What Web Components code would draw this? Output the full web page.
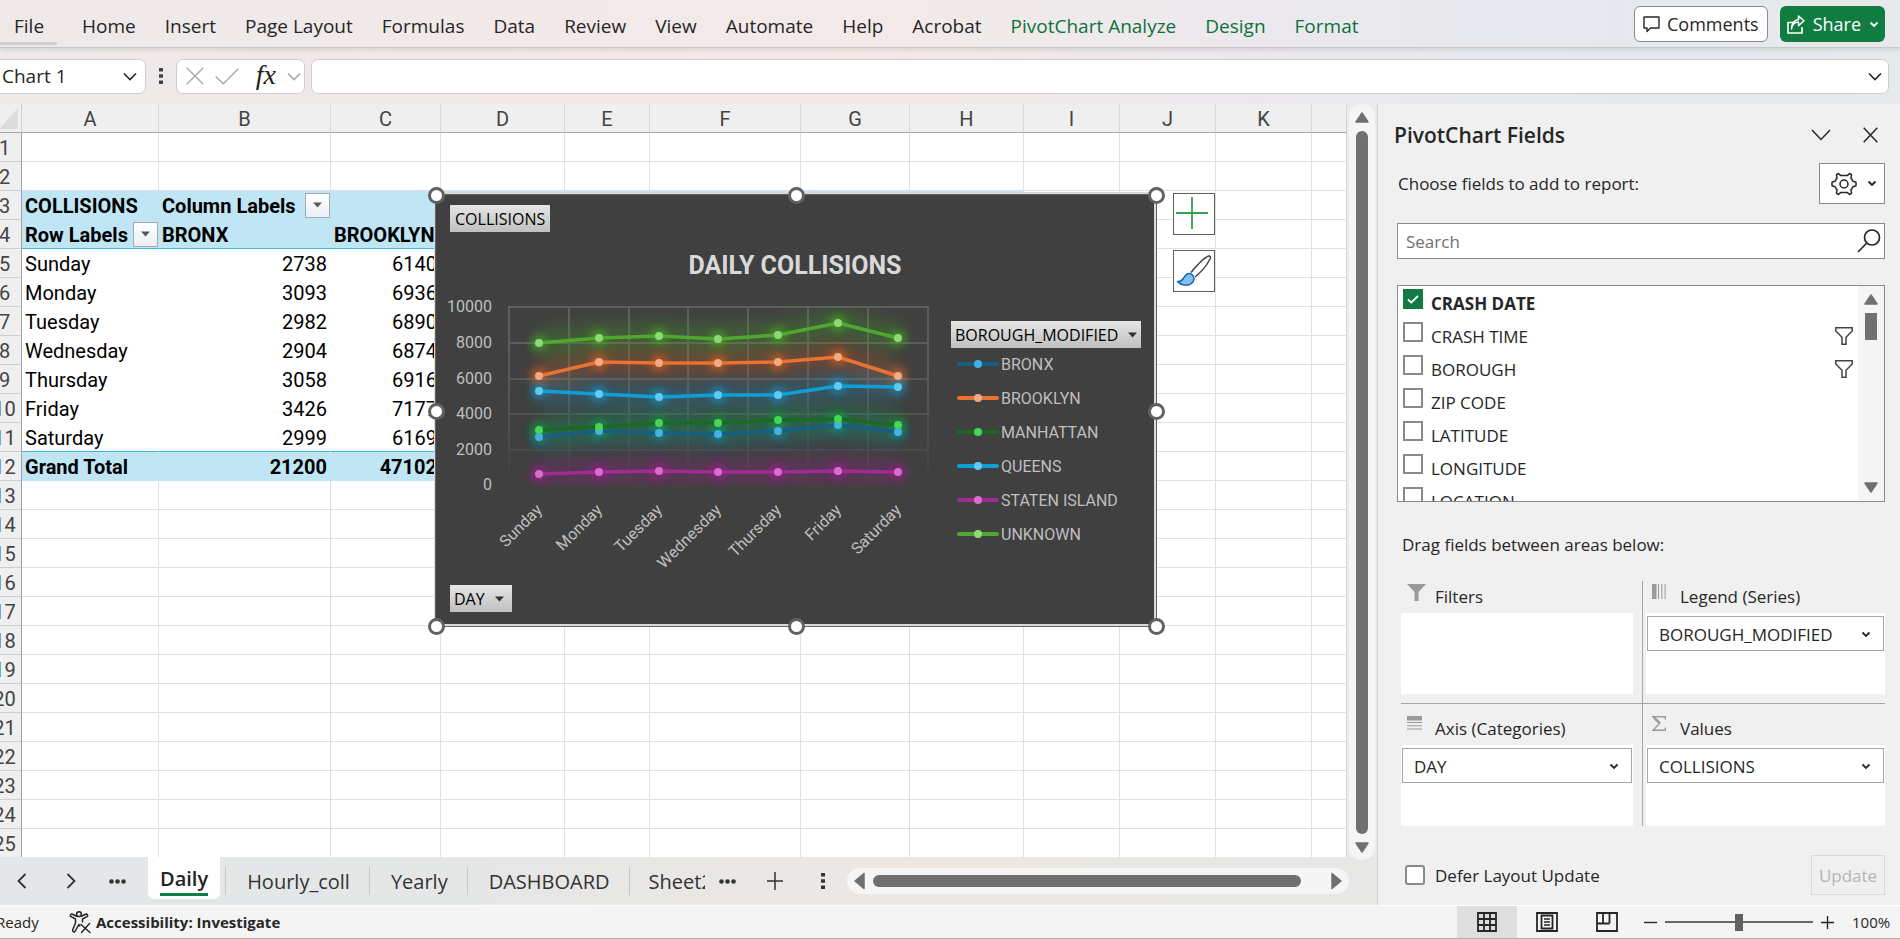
<!DOCTYPE html>
<html lang="en">
<head>
<meta charset="utf-8">
<title>Daily collisions workbook</title>
<style>
  html, body { margin: 0; height: 100%; }
  body {
    --ui: "Open Sans", "Noto Sans", sans-serif;
    --cell: Roboto, "Liberation Sans", sans-serif;
    --green: #107c41;
    --ink: #262626;
    font-family: var(--ui);
    font-size: 17px;
    color: var(--ink);
    overflow: hidden;
  }
</style>
</head>
<body>
<workbook-app></workbook-app>

<script>
const BASE = `<style>
  *, *::before, *::after { box-sizing: border-box; }
  button, input { font: inherit; color: inherit; margin: 0; padding: 0; }
  button { background: none; border: 0; white-space: nowrap; }
</style>`;

function define(name, html, setup) {
  customElements.define(name, class extends HTMLElement {
    constructor() {
      super();
      this.attachShadow({ mode: 'open' }).innerHTML = BASE + html;
    }
    connectedCallback() {
      if (setup && !this.ready) { this.ready = true; setup(this, this.shadowRoot); }
    }
  });
}

/* ---------- icons: [width, height, markup] ---------- */
const line = (w, c = 'currentColor') => `fill="none" stroke="${c}" stroke-width="${w}"`;
const ICONS = {
  chevron: [14, 9, `<path d="M1 1.5 7 7.5 13 1.5" ${line(1.6)}/>`],
  chevronWide: [20, 12, `<path d="M1 1 10 10.5 19 1" ${line(1.5)}/>`],
  chevronSmall: [10, 7, `<path d="M1.5 1.5 5 5 8.5 1.5" ${line(1.8)}/>`],
  left: [10, 16, `<path d="M8.500 1 1.500 8 8.500 15" ${line(1.8)}/>`],
  right: [10, 16, `<path d="M1.500 1 8.500 8 1.500 15" ${line(1.8)}/>`],
  dots: [17, 5, `<g fill="currentColor"><circle cx="2.500" cy="2.500" r="2.300"/><circle cx="8.500" cy="2.500" r="2.300"/><circle cx="14.500" cy="2.500" r="2.300"/></g>`],
  vdots: [4, 16, `<path d="M0 0h4v3.500H0zM0 6.200h4v3.500H0zM0 12.400h4v3.500H0z" fill="currentColor"/>`],
  close: [15, 16, `<path d="M.7.7 14.300 15.300M14.300.7.7 15.300" ${line(1.5)}/>`],
  cancel: [18, 18, `<path d="M.7.7 17.300 17.300M17.300.7.7 17.300" ${line(1.4)}/>`],
  check: [24, 17, `<path d="M.7 8.500 8.300 15.800 23.300.7" ${line(1.4)}/>`],
  plus: [16, 18, `<path d="M8 0v18M0 9h16" ${line(1.5)}/>`],
  plusSmall: [13, 13, `<path d="M6.500 0v13M0 6.500h13" ${line(1.4)}/>`],
  minus: [13, 3, `<path d="M0 1.500h13" ${line(1.4)}/>`],
  comment: [17, 17, `<path d="M1 1h15v11H7.500L4 15.500V12H1z" ${line(1.4)} stroke-linejoin="round"/>`],
  share: [18, 19, `<path d="M6 7.500H1V18h14v-6" ${line(1.6)}/><path d="M4.500 14C5 9.500 7.500 7.200 11.500 7V10.800L17 5.700 11.500 1V4.400C7 5 4.700 8.500 4.500 14z" ${line(1.5)} stroke-linejoin="round"/>`],
  caret: [9, 6, `<path d="M0 .5h9L4.500 5.500z" fill="currentColor"/>`],
  triUp: [14, 11, `<path d="M7 1 13 10H1z" fill="currentColor" stroke="currentColor" stroke-width="1.500" stroke-linejoin="round"/>`],
  triDown: [14, 11, `<path d="M7 10 1 1H13z" fill="currentColor" stroke="currentColor" stroke-width="1.500" stroke-linejoin="round"/>`],
  triLeft: [11, 16, `<path d="M1 8 10 .5V15.500z" fill="currentColor" stroke="currentColor" stroke-width="1.500" stroke-linejoin="round"/>`],
  triRight: [11, 16, `<path d="M10 8 1 .5V15.500z" fill="currentColor" stroke="currentColor" stroke-width="1.500" stroke-linejoin="round"/>`],
  gear: [26, 24, `<g ${line(1.5)} stroke-linejoin="round"><path d="M7.500 1.500 9.500 3.400H16.500L18.500 1.500 20.500 2.700 20 6 22 9.300 25 10.200V13.800L22 14.700 20 18 20.500 21.300 18.500 22.500 16.500 20.600H9.500L7.500 22.500 5.500 21.300 6 18 4 14.700 1 13.800V10.200L4 9.300 6 6 5.500 2.700z"/><circle cx="13" cy="12" r="4"/></g>`],
  search: [24, 24, `<g ${line(1.7)}><circle cx="15" cy="8.500" r="7.500"/><path d="M9.800 14 1 23"/></g>`],
  funnel: [18, 18, `<path d="M.8.8H17.200V4L11 10.300V17.200H7V10.300L.8 4z" ${line(1.5)}/>`],
  funnelSolid: [19, 17, `<path d="M0 0H19L11.500 8V17H7.500V8z" fill="#9a9a9a"/>`],
  columns: [14, 15, `<path d="M0 0h4.500v15H0zM6 0h1v15H6zM9.300 0h1v15h-1zM12.600 0h1v15h-1z" fill="#9a9a9a"/>`],
  rows: [15, 14, `<path d="M0 0h15v4.500H0zM0 6h15v1H0zM0 9.200h15v1H0zM0 12.400h15v1H0z" fill="#9a9a9a"/>`],
  sigma: [14, 15, `<path d="M13.300 3.500V.7H1L7.500 7.500 1 14.300H13.300V11.500" ${line(1.4, '#9a9a9a')}/><path d="M1.500 1 8 7.500" ${line(2.4, '#9a9a9a')}/>`],
  grid: [20, 20, `<path d="M1 1H19V19H1zM1 7H19M1 13H19M7 1V19M13 1V19" ${line(1.8)}/>`],
  layout: [22, 20, `<g ${line(1.8)}><path d="M1 1H21V19H1z"/><path d="M5.500 3.500H16.500V16.500H5.500z" /><path d="M8 7H14M8 10H14M8 13H14" stroke-width="1.400"/></g>`],
  breaks: [22, 20, `<path d="M1 1H21V19H1zM7 1V11.500M13.500 1V11.500M1 11.500H13.500" ${line(1.8)}/>`],
  person: [22, 22, `<g ${line(1.5)} stroke-linejoin="round" stroke-linecap="round"><circle cx="10" cy="3.200" r="2.400"/><path d="M7.800 5.200 2.800 3C1.200 3 .8 5 2 5.600L6.500 8V12L3.600 19C3.400 21 5.600 21.500 6.300 20L9.800 13.500 10.800 15"/><path d="M12.200 5.200 17.200 3C18.800 3 19.200 5 18 5.600L13.500 8V11"/><path d="M12 13.500 21 21.500M20.500 12.500 12.500 21.500"/></g>`],
  corner: [19, 21, `<path d="M19 0V21H0z" fill="#dcdcdc"/>`],
  cross: [26, 32, `<path d="M13 0V32M-3 16H29" ${line(1.8, '#38a14c')}/>`],
  brush: [36, 32, `<path d="M15 17.500C19 12 28 3 32 1.300 34.500.5 35 1.800 34 4 31 10 24 18 19 22" fill="#fff" stroke="#444" stroke-width="1.500"/><path d="M1.500 26.500C5 27 6.500 25 8 22.500 10 18.500 13 17.500 16 19.500 19 22 18.500 26 15.500 28.500 11.500 31.500 5 30.500 1.500 26.500z" fill="#83beec" stroke="#1266b4" stroke-width="1.500" stroke-linejoin="round"/>`]
};
define('ui-icon', `<style>:host{display:inline-flex;flex:none} svg{display:block;overflow:visible}</style><span></span>`, (el, root) => {
  const [w, h, body] = ICONS[el.getAttribute('name')];
  root.querySelector('span').innerHTML = `<svg width="${w}" height="${h}" viewBox="0 0 ${w} ${h}" aria-hidden="true">${body}</svg>`;
});

/* ---------- ribbon ---------- */
define('ribbon-tab', `<style>
  :host { display: block; }
  button { font-size: 19px; line-height: 26px; padding: 8px 15px 0 14px; height: 42px; border-bottom: 3px solid transparent; }
  :host([contextual]) button { color: #0f703b; }
  :host([first]) button { padding: 8px 13px 0 14px; border-bottom-color: #d0d0d0; border-radius: 2px; }
</style><button type="button" role="tab"><slot></slot></button>`);

define('ribbon-bar', `<style>
  :host { display: flex; align-items: center; height: 48px; padding-right: 15px;
    background: linear-gradient(90deg, #efe9ea, #f3eae8 45%, #ebe9ee 68%, #e5e9ee 85%, #e8e9ec);
    border-bottom: 1px solid #c9c6c7; box-shadow: 0 2px 4px #0000001a; position: relative; }
  nav { display: flex; flex: 1; }
  ribbon-tab[first] { margin-right: 11px; }
  .action { display: flex; align-items: center; height: 36px; border-radius: 6px; font-size: 18px; line-height: 26px; }
  .comments { gap: 7px; padding: 1px 8px 0; background: #fff; border: 1px solid #8a8a8a; margin-right: 12px; }
  .share { gap: 8px; padding: 1px 6px 0 7px; background: var(--green); color: #fff; }
</style>
<nav role="tablist" aria-label="Ribbon">
  <ribbon-tab first>File</ribbon-tab><ribbon-tab>Home</ribbon-tab><ribbon-tab>Insert</ribbon-tab>
  <ribbon-tab>Page Layout</ribbon-tab><ribbon-tab>Formulas</ribbon-tab><ribbon-tab>Data</ribbon-tab>
  <ribbon-tab>Review</ribbon-tab><ribbon-tab>View</ribbon-tab><ribbon-tab>Automate</ribbon-tab>
  <ribbon-tab>Help</ribbon-tab><ribbon-tab>Acrobat</ribbon-tab>
  <ribbon-tab contextual>PivotChart Analyze</ribbon-tab><ribbon-tab contextual>Design</ribbon-tab><ribbon-tab contextual>Format</ribbon-tab>
</nav>
<button class="action comments" type="button"><ui-icon name="comment"></ui-icon>Comments</button>
<button class="action share" type="button"><ui-icon name="share"></ui-icon>Share<ui-icon name="chevronSmall"></ui-icon></button>`);

/* ---------- formula bar ---------- */
define('formula-bar', `<style>
  :host { display: flex; align-items: center; height: 56px; padding: 0 11px 0 0;
    background: linear-gradient(90deg, #efe9ea, #f4e8e6 45%, #ebe9ee 68%, #e5e9ee 85%, #e6eaed); }
  .box { display: flex; align-items: center; height: 35px; background: #fff; border: 1px solid #cfcdcd; border-radius: 7px; }
  .name { width: 154px; margin-left: -8px; padding: 0 8px 0 9px; }
  input { border: 0; outline: 0; background: none; min-width: 0; flex: 1; font-size: 19px; }
  .grip { margin: 0 13px; color: #444; }
  .fx { width: 129px; justify-content: space-between; padding: 0 3px 0 9px; color: #a8a8a8; }
  .fx button { display: flex; }
  .fn { font: italic 400 28px/28px "Liberation Serif", serif; color: #222; padding: 0 0 2px 6px; }
  .formula { flex: 1; margin-left: 6px; padding: 0 6px 0 8px; }
</style>
<div class="box name"><input aria-label="Name box" value="Chart 1"><ui-icon name="chevron"></ui-icon></div>
<ui-icon class="grip" name="vdots"></ui-icon>
<div class="box fx">
  <button type="button" aria-label="Cancel"><ui-icon name="cancel"></ui-icon></button>
  <button type="button" aria-label="Enter"><ui-icon name="check"></ui-icon></button>
  <button type="button" class="fn">fx</button>
  <button type="button" aria-label="Functions"><ui-icon name="chevron"></ui-icon></button>
</div>
<div class="box formula"><input aria-label="Formula"><ui-icon name="chevron"></ui-icon></div>`);

/* ---------- worksheet grid ---------- */
const COLS = { A: 137, B: 172, C: 110, D: 124, E: 85, F: 151, G: 109, H: 114, I: 96, J: 96, K: 96 };
const DATA = {
  3: ['COLLISIONS', 'Column Labels', ''],
  4: ['Row Labels', 'BRONX', 'BROOKLYN'],
  5: ['Sunday', 2738, 6140], 6: ['Monday', 3093, 6936], 7: ['Tuesday', 2982, 6890],
  8: ['Wednesday', 2904, 6874], 9: ['Thursday', 3058, 6916], 10: ['Friday', 3426, 7177],
  11: ['Saturday', 2999, 6169], 12: ['Grand Total', 21200, 47102]
};
define('sheet-grid', `<style>
  :host { display: block; overflow: hidden; position: relative; background: #fff; font-family: var(--cell); font-size: 20px; }
  table { width: calc(100% + 17px); margin-left: -17px; border-collapse: separate; border-spacing: 0; table-layout: fixed; }
  th, td { height: 29px; padding: 2px 3px 0; line-height: 26px; white-space: nowrap; overflow: hidden;
    border-right: 1px solid #e0e0e0; border-bottom: 1px solid #e0e0e0; text-align: left; font-weight: 400; }
  thead th { background: #efefef; text-align: center; color: #444; border-right-color: #d9d9d9; border-bottom-color: #a6a6a6; }
  tbody th { background: #efefef; color: #444; text-align: center; padding-left: 5px; padding-right: 0; border-right-color: #a0a0a0; border-bottom-color: #cfcfcf; }
  thead th:first-child { padding: 0 3px 3px 0; vertical-align: bottom; line-height: 0; text-align: right; border-right-color: #cfcfcf; }
  td:last-child, th:last-child { border-right-color: #d6d6d6; }
  tr.plain td.pv { border-color: transparent; color: #000; }
  tr.head td.pv { background: #c0e6f5; border-color: #c0e6f5; font-weight: 700; color: #000; }
  tr.rule td.pv { border-bottom-color: #44b3e1; }
  td.num { text-align: right; }
  td.drop { padding: 0 0 0 3px; }
  .lab { display: flex; justify-content: space-between; align-items: center; height: 28px; }
  .lab span { padding-top: 2px; }
  .lab button { width: 25px; height: 25px; display: flex; align-items: center; justify-content: center;
    border: 1px solid #a3a9b3; background: linear-gradient(#fff, #eaeef5); color: #5a5a5a; }
  ::slotted(*) { position: absolute; }
</style><table aria-label="Worksheet Daily"></table><slot></slot>`, (el, root) => {
  const names = Object.keys(COLS);
  let html = '<colgroup><col style="width:39px">' + names.map(n => `<col style="width:${COLS[n]}px">`).join('') + '<col></colgroup>';
  html += '<thead><tr><th><ui-icon name="corner"></ui-icon></th>' + names.map(n => `<th scope="col">${n}</th>`).join('') + '<th></th></tr></thead><tbody>';
  for (let r = 1; r <= 25; r++) {
    const row = DATA[r];
    const cls = !row ? '' : [3, 4, 12].includes(r) ? 'head' : 'plain';
    const rule = r === 4 || r === 11 ? ' rule' : '';
    html += `<tr class="${cls}${rule}"><th scope="row">${r}</th>`;
    for (let c = 0; c < 12; c++) {
      const v = row && c < 3 ? row[c] : '';
      const drop = (r === 3 && c === 1) || (r === 4 && c === 0);
      const k = (row && c < 8 ? 'pv' : '') + (typeof v === 'number' ? ' num' : '') + (drop ? ' drop' : '');
      html += `<td class="${k}">` + (drop
        ? `<div class="lab"><span>${v}</span><button type="button" aria-label="Filter ${v}"><ui-icon name="caret"></ui-icon></button></div>` : v) + '</td>';
    }
    html += '</tr>';
  }
  root.querySelector('table').innerHTML = html + '</tbody>';
});

/* ---------- pivot chart ---------- */
const SERIES = [
  { name: 'BRONX', line: '#156082', dot: '#45b0e1', y: [437, 431, 433, 434, 431, 425, 432], glow: '#0f8ea8' },
  { name: 'BROOKLYN', line: '#e97132', dot: '#f2aa84', y: [376, 362, 363, 363, 362, 357, 376], glow: '#e9601c' },
  { name: 'MANHATTAN', line: '#196b24', dot: '#47d459', y: [430, 427, 423, 423, 420, 419, 425], glow: '#12962a' },
  { name: 'QUEENS', line: '#0f9ed5', dot: '#60caf3', y: [391, 394, 397, 395, 395, 386, 387], glow: '#1597d0' },
  { name: 'STATEN ISLAND', line: '#a02b93', dot: '#d86dcd', y: [474, 472, 471, 472, 472, 471, 472], glow: '#a8189a' },
  { name: 'UNKNOWN', line: '#4ea72e', dot: '#8ed973', y: [343, 338, 336, 339, 335, 323, 338], glow: '#45b51c' }
];
const PX = [539, 599, 659, 718, 778, 838, 898];
const DAYS = ['Sunday', 'Monday', 'Tuesday', 'Wednesday', 'Thursday', 'Friday', 'Saturday'];

define('field-button', `<style>
  :host { display: block; }
  button { display: flex; width: 100%; align-items: center; justify-content: space-between; height: 27px; padding: 0 5px 0 4px; font: 16px/26px var(--ui); color: #000;
    background: linear-gradient(#e6e6e6, #bfbfbf); }
  ui-icon { margin: 0 3px 0 10px; color: #333; }
  :host([plain]) ui-icon { display: none; }
  :host([plain]) button { padding: 0 5px; }
</style><button type="button"><slot></slot><ui-icon name="caret"></ui-icon></button>`);

define('pivot-chart', `<style>
  :host { display: flex; flex-direction: column; width: 722px; height: 434px; background: #404040; border: 2px solid #d9d9d9;
    padding: 11px 13px 12px 4px; color: #d9d9d9; }
  .frame { position: absolute; inset: 0 -3px -3px -1px; border: 1px solid #636363; }
  i { position: absolute; width: 17px; height: 17px; margin: -8px; border: 3px solid #616161; border-radius: 50%; background: #fff; }
  field-button { align-self: flex-start; margin-left: 10px; }
  h2 { margin: 19px 0 -1px 9px; text-align: center; font-size: 25px; line-height: 30px; font-weight: 700; }
  .body { display: grid; grid-template-columns: 1fr 190px; flex: 1; }
  svg { display: block; overflow: visible; }
  .axis { fill: #bfbfbf; font-size: 16px; }
  aside { padding-top: 41px; }
  aside field-button { margin: 0; }
  ul { list-style: none; margin: -1px 0 0; padding: 0 0 0 6px; font-size: 16px; color: #bfbfbf; }
  li { display: flex; align-items: center; gap: 2px; height: 34px; }
  .tools { position: absolute; left: 737px; top: -1px; display: flex; flex-direction: column; gap: 15px; }
  .tools button { width: 42px; height: 42px; display: flex; align-items: center; justify-content: center; background: #fff; border: 1px solid #5e5e5e; }
  .tools button:first-child { padding: 0 4px 3px 0; }
</style>
<field-button plain>COLLISIONS</field-button>
<h2>DAILY COLLISIONS</h2>
<div class="body"><svg width="511" height="305" viewBox="440 280 511 305" role="img" aria-label="Daily collisions by borough"></svg>
  <aside><field-button>BOROUGH_MODIFIED</field-button><ul></ul></aside></div>
<field-button>DAY</field-button>
<div class="frame"></div>
<div class="tools"><button type="button" aria-label="Chart elements"><ui-icon name="cross"></ui-icon></button>
<button type="button" aria-label="Chart styles"><ui-icon name="brush"></ui-icon></button></div>`, (el, root) => {
  const xs = [509, 569, 629, 688, 748, 808, 868, 928];
  const ys = [307, 343, 379, 414, 450, 485];
  let s = `<defs><linearGradient id="fade" gradientUnits="userSpaceOnUse" x1="0" y1="307" x2="0" y2="485"><stop offset="0" stop-color="#5f5f5f"/><stop offset=".5" stop-color="#575757"/><stop offset="1" stop-color="#404040"/></linearGradient>
    <filter id="soft" filterUnits="userSpaceOnUse" x="440" y="280" width="511" height="240"><feGaussianBlur stdDeviation="8"/></filter>
    <filter id="spot" filterUnits="userSpaceOnUse" x="440" y="280" width="511" height="240"><feGaussianBlur stdDeviation="4"/></filter>
    <clipPath id="plot"><path d="M508 306H929V486H508z"/></clipPath></defs>`;
  s += '<g fill="url(#fade)">' + xs.map(x => `<rect x="${x - 1}" y="306" width="2" height="180"/>`).join('') + '</g>';
  const tone = ['#5f5f5f', '#5c5c5c', '#585858', '#535353', '#4a4a4a', '#404040'];
  s += ys.map((y, i) => `<path d="M508 ${y}H929" stroke="${tone[i]}" stroke-width="2"/>`).join('');
  const pts = q => q.y.map((y, i) => PX[i] + ',' + y).join(' ');
  s += '<g clip-path="url(#plot)">' + SERIES.map(q => `<polyline points="${pts(q)}" fill="none" stroke="${q.glow}" stroke-width="28" opacity=".24" filter="url(#soft)"/>`).join('') + '</g>';
  s += SERIES.map(q => `<g filter="url(#spot)" opacity=".65" fill="${q.glow}">` + q.y.map((y, i) => `<circle cx="${PX[i]}" cy="${y}" r="8"/>`).join('') + '</g>').join('');
  s += SERIES.map(q => `<polyline points="${pts(q)}" fill="none" stroke="${q.line}" stroke-width="3.5" stroke-linejoin="round"/>` +
    q.y.map((y, i) => `<circle cx="${PX[i]}" cy="${y}" r="4" fill="${q.dot}"/>`).join('')).join('');
  s += ys.map((y, i) => `<text class="axis" x="492" y="${y + 5}" text-anchor="end">${10000 - 2000 * i}</text>`).join('');
  s += DAYS.map((d, i) => `<text class="axis" text-anchor="end" transform="translate(${PX[i] + 4} 511) rotate(-45)">${d}</text>`).join('');
  root.querySelector('svg').innerHTML = s;
  root.querySelector('ul').innerHTML = SERIES.map(q => `<li><svg width="42" height="10" aria-hidden="true"><path d="M2 5H40" stroke="${q.line}" stroke-width="4" stroke-linecap="round"/><circle cx="21" cy="5" r="4" fill="${q.dot}"/></svg>${q.name}</li>`).join('');
  for (const y of [0, 50, 100]) for (const x of [0, 50, 100]) {
    if (x === 50 && y === 50) continue;
    const h = document.createElement('i');
    h.style.left = x + '%'; h.style.top = y + '%';
    root.querySelector('.frame').append(h);
  }
});

/* ---------- scroll bars ---------- */
define('scroll-track', `<style>
  :host { display: flex; flex-direction: column; align-items: center; width: 26px; padding: 8px 0 7px; gap: 8px; border-radius: 13px; background: #f5f5f5; color: #707070; }
  .end { display: flex; }
  .rail { flex: 1; width: 12px; display: flex; flex-direction: column; }
  .rail::before { content: ""; width: 12px; border-radius: 6px; background: #707070; flex: 1; }
  :host([horizontal]) { flex-direction: row; width: auto; height: 26px; padding: 0 7px; }
  :host([horizontal]) .rail { width: auto; height: 12px; padding-right: 22px; }
  :host([horizontal]) .rail::before { width: auto; }
  :host([square]) { border-radius: 0; padding: 8px 0; }
  :host([square]) .rail::before { flex: none; height: 27px; border-radius: 0; }
</style><span class="end"></span><div class="rail"></div><span class="end"></span>`, (el, root) => {
  const names = el.hasAttribute('horizontal') ? ['triLeft', 'triRight'] : ['triUp', 'triDown'];
  root.querySelectorAll('.end').forEach((e, i) => { e.innerHTML = `<ui-icon name="${names[i]}"></ui-icon>`; });
});

/* ---------- sheet tabs ---------- */
define('sheet-tabs', `<style>
  :host { display: flex; align-items: center; height: 48px; font-size: 20px; color: #333; }
  button { display: flex; align-items: center; }
  .nav { gap: 39px; padding: 0 22px 0 17px; display: flex; }
  .nav button:last-child { margin-left: -6px; }
  [role=tablist] { display: flex; height: 100%; align-items: center; }
  .active { align-self: flex-start; height: 42px; background: #fff; border-radius: 0 0 6px 6px; padding: 0 12px; font-weight: 600; color: #222; margin-right: 5px; }
  .active span { border-bottom: 3px solid var(--green); line-height: 28px; padding-top: 4px; }
  .tab { height: 28px; border-left: 1px solid #c6c8c8; padding: 2px 19px 0 21px; line-height: 28px; }
  .cut { width: 76px; padding-left: 19px; padding-right: 0; overflow: hidden; }
  .more { margin: 0 31px 0 14px; }
  .grip { margin: 0 22px 0 38px; }
  scroll-track { flex: 1; }
</style>
<div class="nav"><button type="button" aria-label="Previous sheet"><ui-icon name="left"></ui-icon></button><button type="button" aria-label="Next sheet"><ui-icon name="right"></ui-icon></button><button type="button" aria-label="All sheets"><ui-icon name="dots"></ui-icon></button></div>
<div role="tablist" aria-label="Sheets">
  <button type="button" class="active" role="tab" aria-selected="true"><span>Daily</span></button>
  <button type="button" class="tab" role="tab">Hourly_coll</button><button type="button" class="tab" role="tab">Yearly</button>
  <button type="button" class="tab" role="tab">DASHBOARD</button><button type="button" class="tab cut" role="tab">Sheet2</button>
</div>
<button class="more" type="button" aria-label="More sheets"><ui-icon name="dots"></ui-icon></button>
<button type="button" aria-label="New sheet"><ui-icon name="plus"></ui-icon></button>
<ui-icon class="grip" name="vdots"></ui-icon>
<scroll-track horizontal></scroll-track>`);

/* ---------- fields pane ---------- */
define('field-check', `<style>
  :host { display: block; height: 33px; }
  label { display: flex; align-items: flex-start; gap: 8px; padding: 3px 5px 0 5px; height: 33px; }
  span { flex: 1; line-height: 30px; }
  input { appearance: none; width: 20px; height: 20px; border: 2px solid #8a8a8a; background: #fff; flex: none; }
  input:checked { border-color: var(--green); background: var(--green) url("data:image/svg+xml,%3Csvg xmlns='http://www.w3.org/2000/svg' width='16' height='16'%3E%3Cpath d='M3 8.500 6.300 11.500 13 5' fill='none' stroke='white' stroke-width='1.800'/%3E%3C/svg%3E") center; }
  ui-icon { margin: 5px 0 0; display: none; color: #444; }
  :host([filtered]) ui-icon { display: inline-flex; }
  :host([checked]) span { font-weight: 700; }
</style><label><input type="checkbox"><span><slot></slot></span><ui-icon name="funnel"></ui-icon></label>`, (el, root) => {
  root.querySelector('input').checked = el.hasAttribute('checked');
});

define('field-area', `<style>
  :host { display: flex; flex-direction: column; }
  h3 { display: flex; align-items: flex-start; margin: 0; height: 32px; padding-top: 3px; font-size: 17px; font-weight: 400; line-height: 26px; }
  .ic { display: flex; width: 34px; padding-left: 6px; }
  b { font-weight: 400; }
  .drop { background: #fff; height: 81px; padding: 3px 1px; }
</style><h3><span class="ic"></span><b></b></h3><div class="drop"><slot></slot></div>`, (el, root) => {
  root.querySelector('.ic').innerHTML = `<ui-icon name="${el.getAttribute('icon')}"></ui-icon>`;
  root.querySelector('b').textContent = el.getAttribute('label');
});

define('area-field', `<style>
  :host { display: block; }
  button { width: 100%; height: 35px; display: flex; align-items: center; justify-content: space-between; padding: 1px 12px 0 11px; border: 1px solid #a6a6a6; background: #fff; }
</style><button type="button" aria-haspopup="menu"><slot></slot><ui-icon name="chevronSmall"></ui-icon></button>`);

define('fields-pane', `<style>
  :host { display: flex; flex-direction: column; background: #f0f0f0; border-left: 1px solid #d0d0d0; padding: 0 15px 10px 19px; }
  header { display: flex; align-items: center; height: 60px; padding: 2px 7px 0 0; margin-left: -3px; }
  h2 { flex: 1; margin: 0; font-size: 21px; line-height: 28px; font-weight: 600; }
  header button { display: flex; margin-left: 32px; }
  .choose { display: flex; align-items: center; height: 39px; }
  p { margin: 0; flex: 1; padding-left: 1px; }
  .gear { display: flex; align-items: center; justify-content: flex-end; gap: 10px; width: 66px; height: 41px; padding: 0 7px 0 0; border: 1px solid #8a8a8a; background: #fff; }
  .search { display: flex; align-items: center; margin-top: 20px; height: 36px; padding: 0 3px 0 8px; border: 1px solid #8a8a8a; background: #fff; }
  .search input { flex: 1; border: 0; outline: 0; background: none; min-width: 0; }
  .search input::placeholder { color: #707070; opacity: 1; }
  .list { display: flex; height: 217px; margin-top: 26px; border: 1px solid #8a8a8a; background: #fff; overflow: hidden; flex: none; }
  .list > div { flex: 1; overflow: hidden; }
  .drag { margin: 30px 0 23px 4px; line-height: 26px; flex: none; }
  .areas { display: grid; grid-template-columns: 242px 1fr; margin-left: 4px; }
  field-area { padding: 0 9px 9px 0; border-right: 1px solid #a6a6a6; border-bottom: 1px solid #a6a6a6; }
  field-area:nth-child(even) { padding-left: 3px; padding-right: 0; border-right: 0; }
  field-area:nth-child(n+3) { border-bottom: 0; padding-top: 9px; padding-bottom: 0; }
  footer { display: flex; align-items: center; margin-top: auto; padding-left: 8px; }
  footer label { flex: 1; display: flex; align-items: center; gap: 10px; }
  footer input { appearance: none; width: 20px; height: 20px; border: 2px solid #8a8a8a; border-radius: 3px; background: #fff; }
  footer button { width: 74px; height: 40px; border: 1px solid #d9d9d9; color: #b5b5b5; }
</style>
<header><h2>PivotChart Fields</h2><button type="button" aria-label="Pane options"><ui-icon name="chevronWide"></ui-icon></button><button type="button" aria-label="Close pane"><ui-icon name="close"></ui-icon></button></header>
<div class="choose"><p>Choose fields to add to report:</p><button class="gear" type="button" aria-label="Tools"><ui-icon name="gear"></ui-icon><ui-icon name="chevronSmall"></ui-icon></button></div>
<div class="search"><input type="text" placeholder="Search" aria-label="Search fields"><ui-icon name="search"></ui-icon></div>
<div class="list"><div>
  <field-check checked>CRASH DATE</field-check><field-check filtered>CRASH TIME</field-check><field-check filtered>BOROUGH</field-check>
  <field-check>ZIP CODE</field-check><field-check>LATITUDE</field-check><field-check>LONGITUDE</field-check><field-check>LOCATION</field-check>
</div><scroll-track square></scroll-track></div>
<p class="drag">Drag fields between areas below:</p>
<div class="areas">
  <field-area icon="funnelSolid" label="Filters"></field-area>
  <field-area icon="columns" label="Legend (Series)"><area-field>BOROUGH_MODIFIED</area-field></field-area>
  <field-area icon="rows" label="Axis (Categories)"><area-field>DAY</area-field></field-area>
  <field-area icon="sigma" label="Values"><area-field>COLLISIONS</area-field></field-area>
</div>
<footer><label><input type="checkbox">Defer Layout Update</label><button type="button" disabled>Update</button></footer>`);

/* ---------- status bar ---------- */
define('status-bar', `<style>
  :host { display: flex; align-items: center; height: 34px; background: #f4f4f4; border-top: 1px solid #fff; border-bottom: 1px solid #b0b0b0; font-size: 15px; }
  .ready { margin-left: -4px; width: 73px; }
  .acc { display: flex; align-items: center; gap: 5px; font-weight: 700; flex: 1; }
  .view { width: 60px; height: 100%; display: flex; align-items: center; justify-content: center; }
  .on { background: #dedede; }
  .zoom { display: flex; align-items: center; gap: 8px; margin: 0 18px 0 7px; }
  .zoom button { display: flex; }
  input { appearance: none; width: 148px; height: 18px; background: linear-gradient(#666, #666) center / 100% 2px no-repeat; }
  input::-webkit-slider-thumb { appearance: none; width: 8px; height: 17px; background: #616161; }
  .pct { width: 48px; }
</style>
<span class="ready">Ready</span>
<button class="acc" type="button"><ui-icon name="person"></ui-icon>Accessibility: Investigate</button>
<button class="view on" type="button" aria-label="Normal view"><ui-icon name="grid"></ui-icon></button>
<button class="view" type="button" aria-label="Page layout view"><ui-icon name="layout"></ui-icon></button>
<button class="view" type="button" aria-label="Page break preview"><ui-icon name="breaks"></ui-icon></button>
<div class="zoom"><button type="button" aria-label="Zoom out"><ui-icon name="minus"></ui-icon></button><input type="range" min="0" max="100" value="50" aria-label="Zoom"><button type="button" aria-label="Zoom in"><ui-icon name="plusSmall"></ui-icon></button></div>
<span class="pct">100%</span>`);

/* ---------- page ---------- */
define('workbook-app', `<style>
  :host { display: flex; flex-direction: column; height: 100vh; }
  main { flex: 1; min-height: 0; display: grid; grid-template-columns: minmax(0, 1fr) 523px; }
  .work { display: flex; flex-direction: column; min-height: 0; background: linear-gradient(90deg, #e2e7e9, #e5e7e6 35%, #ece7e3 65%, #e7e7e5 90%); }
  .top { flex: 1; min-height: 0; display: flex; background: linear-gradient(90deg, transparent 95%, #ebebee 95%); }
  sheet-grid { flex: 1; min-width: 0; }
  .work scroll-track { margin: 0 2px -3px; }
  sheet-tabs { padding-right: 28px; }
  pivot-chart { left: 434px; top: 88px; }
</style>
<ribbon-bar></ribbon-bar>
<formula-bar></formula-bar>
<main>
  <section class="work">
    <div class="top"><sheet-grid><pivot-chart></pivot-chart></sheet-grid><scroll-track></scroll-track></div>
    <sheet-tabs></sheet-tabs>
  </section>
  <fields-pane></fields-pane>
</main>
<status-bar></status-bar>`);
</script>
</body>
</html>
